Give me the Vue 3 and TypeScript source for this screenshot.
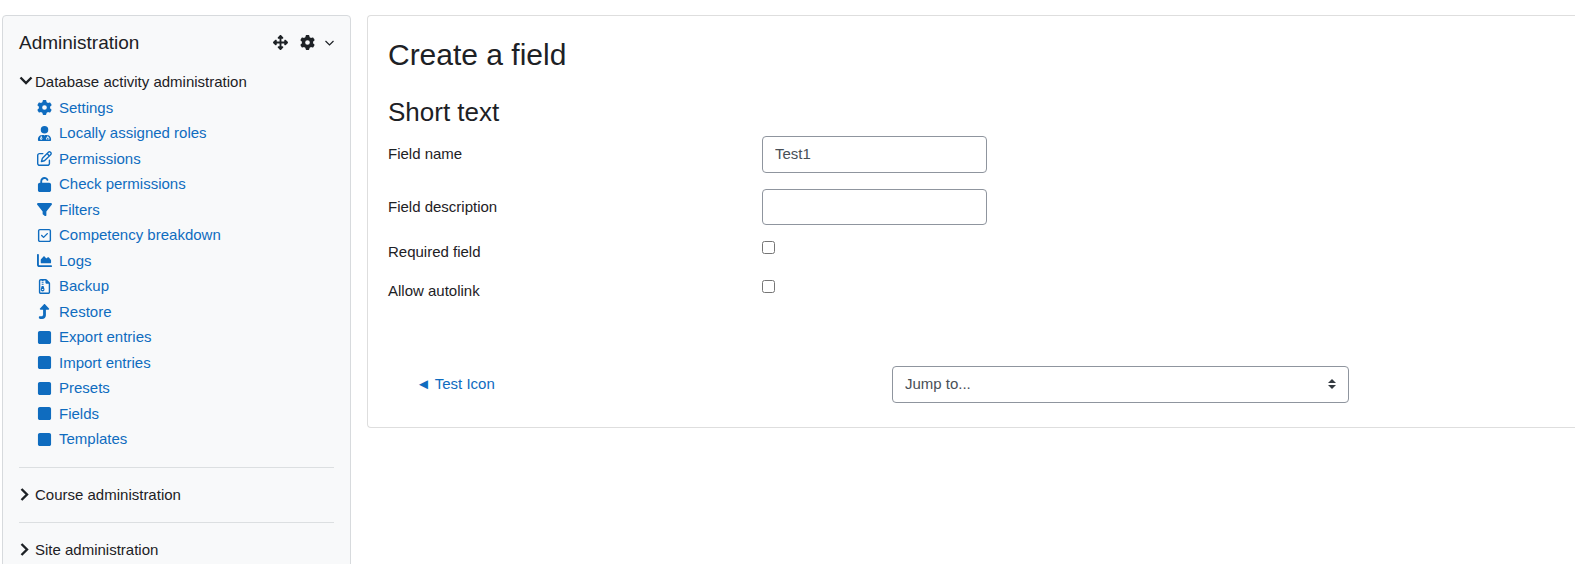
<script setup lang="ts">
import { ref } from 'vue'

interface Glyph {
  box: string
  path: string
}

interface MenuLink {
  label: string
  icon: string
}

const glyphs: Record<string, Glyph> = {
  gear: {
    box: '0 0 512 512',
    path: 'M495.9 166.6c3.2 8.7 .5 18.4-6.4 24.6l-43.3 39.4c1.1 8.3 1.7 16.8 1.7 25.4s-.6 17.1-1.7 25.4l43.3 39.4c6.9 6.2 9.6 15.9 6.4 24.6c-4.4 11.9-9.7 23.3-15.8 34.3l-4.7 8.1c-6.6 11-14 21.4-22.1 31.2c-5.9 7.2-15.7 9.6-24.5 6.8l-55.7-17.7c-13.4 10.3-28.2 18.9-44 25.4l-12.5 57.1c-2 9.1-9 16.3-18.2 17.8c-13.8 2.3-28 3.5-42.5 3.5s-28.7-1.2-42.5-3.5c-9.2-1.5-16.2-8.7-18.2-17.8l-12.5-57.1c-15.8-6.5-30.6-15.1-44-25.4L83.1 425.9c-8.8 2.8-18.6 .3-24.5-6.8c-8.1-9.8-15.5-20.2-22.1-31.2l-4.7-8.1c-6.1-11-11.4-22.4-15.8-34.3c-3.2-8.7-.5-18.4 6.4-24.6l43.3-39.4C64.6 273.1 64 264.6 64 256s.6-17.1 1.7-25.4L22.4 191.2c-6.9-6.2-9.6-15.9-6.4-24.6c4.4-11.9 9.7-23.3 15.8-34.3l4.7-8.1c6.6-11 14-21.4 22.1-31.2c5.9-7.2 15.7-9.6 24.5-6.8l55.7 17.7c13.4-10.3 28.2-18.9 44-25.4l12.5-57.1c2-9.1 9-16.3 18.2-17.8C227.3 1.2 241.5 0 256 0s28.7 1.2 42.5 3.5c9.2 1.5 16.2 8.7 18.2 17.8l12.5 57.1c15.8 6.5 30.6 15.1 44 25.4l55.7-17.7c8.8-2.8 18.6-.3 24.5 6.8c8.1 9.8 15.5 20.2 22.1 31.2l4.7 8.1c6.1 11 11.4 22.4 15.8 34.3zM256 336a80 80 0 1 0 0-160 80 80 0 1 0 0 160z',
  },
  move: {
    box: '0 0 512 512',
    path: 'M278.6 9.4c-12.5-12.5-32.8-12.5-45.3 0l-64 64c-9.2 9.2-11.9 22.9-6.9 34.9s16.6 19.8 29.6 19.8h32v96H128V192c0-12.9-7.8-24.6-19.8-29.6s-25.7-2.2-34.9 6.9l-64 64c-12.5 12.5-12.5 32.8 0 45.3l64 64c9.2 9.2 22.9 11.9 34.9 6.9s19.8-16.6 19.8-29.6V288h96v96H192c-12.9 0-24.6 7.8-29.6 19.8s-2.2 25.7 6.9 34.9l64 64c12.5 12.5 32.8 12.5 45.3 0l64-64c9.2-9.2 11.9-22.9 6.9-34.9s-16.6-19.8-29.6-19.8H288V288h96v32c0 12.9 7.8 24.6 19.8 29.6s25.7 2.2 34.9-6.9l64-64c12.5-12.5 12.5-32.8 0-45.3l-64-64c-9.2-9.2-22.9-11.9-34.9-6.9s-19.8 16.6-19.8 29.6v32H288V128h32c12.9 0 24.6-7.8 29.6-19.8s2.2-25.7-6.9-34.9l-64-64z',
  },
  doctor: {
    box: '0 0 448 512',
    path: 'M224 0a128 128 0 1 0 0 256a128 128 0 1 0 0-256zM134 304C60 304 0 364 0 438v46c0 16 12 28 28 28H420c16 0 28-12 28-28v-46c0-74-60-134-134-134H240l-16 28l-16-28zM98 330h28v58a40 40 0 1 1-28 0zM112 410a16 16 0 1 0 0 32a16 16 0 1 0 0-32zM322 330h28v42c24 6 42 28 42 54v36h-48v-26h20v-10c0-16-12-28-28-28s-28 12-28 28v10h20v26h-48v-36c0-26 18-48 42-54z',
  },
  edit: {
    box: '0 0 512 512',
    path: 'M441 58.9L453.1 71c9.4 9.4 9.4 24.6 0 33.9L424 134.1 377.9 88 407 58.9c9.4-9.4 24.6-9.4 33.9 0zM209.8 256.2L344 121.9 390.1 168 255.8 302.2c-2.9 2.9-6.5 5-10.4 6.1l-58.5 16.7 16.7-58.5c1.1-3.9 3.2-7.5 6.1-10.4zM373.1 25L175.8 222.2c-8.7 8.7-15 19.4-18.3 31.1l-28.6 100c-2.4 8.4-.1 17.4 6.1 23.6s15.2 8.5 23.6 6.1l100-28.6c11.8-3.4 22.5-9.7 31.1-18.3L487 138.9c28.1-28.1 28.1-73.7 0-101.8L474.9 25C446.8-3.1 401.2-3.1 373.1 25zM88 64C39.4 64 0 103.4 0 152V424c0 48.6 39.4 88 88 88H360c48.6 0 88-39.4 88-88V312c0-13.3-10.7-24-24-24s-24 10.7-24 24V424c0 22.1-17.9 40-40 40H88c-22.1 0-40-17.9-40-40V152c0-22.1 17.9-40 40-40H200c13.3 0 24-10.7 24-24s-10.7-24-24-24H88z',
  },
  unlock: {
    box: '0 0 448 512',
    path: 'M144 144c0-44.2 35.8-80 80-80c31.9 0 59.4 18.6 72.3 45.7c7.6 16 26.7 22.8 42.6 15.2s22.8-26.7 15.2-42.6C331 33.7 281.5 0 224 0C144.5 0 80 64.5 80 144v48H64c-35.3 0-64 28.7-64 64V448c0 35.3 28.7 64 64 64H384c35.3 0 64-28.7 64-64V256c0-35.3-28.7-64-64-64H144V144z',
  },
  filter: {
    box: '0 0 512 512',
    path: 'M3.9 54.9C10.5 40.9 24.5 32 40 32H472c15.5 0 29.5 8.9 36.1 22.9s4.6 30.5-5.2 42.5L320 320.9V448c0 12.1-6.8 23.2-17.7 28.6s-23.8 4.3-33.5-3l-64-48c-8.1-6-12.8-15.5-12.8-25.6V320.9L9 97.3C-.7 85.4-2.8 68.8 3.9 54.9z',
  },
  check: {
    box: '0 0 448 512',
    path: 'M64 80c-8.8 0-16 7.2-16 16V416c0 8.8 7.2 16 16 16H384c8.8 0 16-7.2 16-16V96c0-8.8-7.2-16-16-16H64zM0 96C0 60.7 28.7 32 64 32H384c35.3 0 64 28.7 64 64V416c0 35.3-28.7 64-64 64H64c-35.3 0-64-28.7-64-64V96zM337 209L209 337c-9.4 9.4-24.6 9.4-33.9 0l-64-64c-9.4-9.4-9.4-24.6 0-33.9s24.6-9.4 33.9 0l47 47L303 175c9.4-9.4 24.6-9.4 33.9 0s9.4 24.6 0 33.9z',
  },
  chart: {
    box: '0 0 512 512',
    path: 'M64 64c0-17.7-14.3-32-32-32S0 46.3 0 64V400c0 44.2 35.8 80 80 80H480c17.7 0 32-14.3 32-32s-14.3-32-32-32H80c-8.8 0-16-7.2-16-16V64zm96 288H448c17.7 0 32-14.3 32-32V251.8c0-7.6-2.7-15-7.7-20.8l-65.8-76.8c-12.1-14.2-33.7-15-46.9-1.8l-21 21c-10 10-26.4 9.2-35.4-1.6l-39.2-47c-12.6-15.1-35.7-15.4-48.7-.6L135.9 215c-5.1 5.8-7.9 13.3-7.9 21.1v84c0 17.7 14.3 32 32 32z',
  },
  archive: {
    box: '0 0 384 512',
    path: 'M64 0C28.7 0 0 28.7 0 64V448c0 35.3 28.7 64 64 64H320c35.3 0 64-28.7 64-64V154.5c0-17-6.7-33.3-18.7-45.3L274.7 18.7C262.7 6.7 246.5 0 229.5 0H64zM64 464c-8.8 0-16-7.2-16-16V64c0-8.8 7.2-16 16-16H96V80h64V48h64v80c0 17.7 14.3 32 32 32h80V448c0 8.8-7.2 16-16 16H64zM96 112h64v32H96zM96 176h64v32H96zM96 240h64l30 100c10 44-20 84-62 84s-72-40-62-84zM112 344a16 16 0 0 0 0 32h32a16 16 0 0 0 0-32z',
  },
  turnUp: {
    box: '0 0 384 512',
    path: 'M350 177.5c3.8-8.8 2-19-4.6-26l-136-144C204.9 2.7 198.6 0 192 0s-12.9 2.7-17.4 7.5l-136 144c-6.6 7-8.4 17.2-4.6 26s12.5 14.5 22 14.5h88V384c0 17.7-14.3 32-32 32H32c-17.7 0-32 14.3-32 32v32c0 17.7 14.3 32 32 32h80c70.7 0 128-57.3 128-128V192h88c9.6 0 18.2-5.7 22-14.5z',
  },
  square: {
    box: '0 0 448 512',
    path: 'M0 96C0 60.7 28.7 32 64 32H384c35.3 0 64 28.7 64 64V416c0 35.3-28.7 64-64 64H64c-35.3 0-64-28.7-64-64V96z',
  },
}

const links: MenuLink[] = [
  { label: 'Settings', icon: 'gear' },
  { label: 'Locally assigned roles', icon: 'doctor' },
  { label: 'Permissions', icon: 'edit' },
  { label: 'Check permissions', icon: 'unlock' },
  { label: 'Filters', icon: 'filter' },
  { label: 'Competency breakdown', icon: 'check' },
  { label: 'Logs', icon: 'chart' },
  { label: 'Backup', icon: 'archive' },
  { label: 'Restore', icon: 'turnUp' },
  { label: 'Export entries', icon: 'square' },
  { label: 'Import entries', icon: 'square' },
  { label: 'Presets', icon: 'square' },
  { label: 'Fields', icon: 'square' },
  { label: 'Templates', icon: 'square' },
]

const collapsed: string[] = ['Course administration', 'Site administration']

const open = ref(true)
const fieldName = ref('Test1')
const fieldDescription = ref('')
const required = ref(false)
const autolink = ref(false)
const jump = ref('')
</script>

<template>
  <div class="page">
    <aside class="block">
      <header class="block-head">
        <h5>Administration</h5>
        <div class="block-tools">
          <button type="button" aria-label="Move Administration block">
            <svg class="icon" :viewBox="glyphs.move.box"><path :d="glyphs.move.path" /></svg>
          </button>
          <button type="button" aria-label="Actions menu">
            <svg class="icon" :viewBox="glyphs.gear.box"><path :d="glyphs.gear.path" /></svg>
            <svg class="caret" viewBox="0 0 10 10"><path d="M1.5 3L5.5 7L9.5 3" /></svg>
          </button>
        </div>
      </header>

      <nav class="tree" aria-label="Administration">
        <section>
          <button type="button" class="branch" :aria-expanded="open" @click="open = !open">
            <svg class="chevron" viewBox="0 0 14 14"><path d="M1.5 2.5L7 8L12.5 2.5" /></svg>
            Database activity administration
          </button>
          <ul v-show="open">
            <li v-for="link in links" :key="link.label">
              <a href="#">
                <svg class="icon" :viewBox="glyphs[link.icon].box"><path fill-rule="evenodd" :d="glyphs[link.icon].path" /></svg>
                {{ link.label }}
              </a>
            </li>
          </ul>
        </section>
        <section v-for="name in collapsed" :key="name">
          <button type="button" class="branch" aria-expanded="false">
            <svg class="chevron" viewBox="0 0 14 14"><path d="M2.5 1L8 6.5L2.5 12" /></svg>
            {{ name }}
          </button>
        </section>
      </nav>
    </aside>

    <main class="content">
      <h2>Create a field</h2>
      <form @submit.prevent>
        <h3>Short text</h3>
        <div class="row">
          <label class="padded" for="name">Field name</label>
          <input id="name" v-model="fieldName" class="control" type="text" />
        </div>
        <div class="row">
          <label class="padded" for="description">Field description</label>
          <input id="description" v-model="fieldDescription" class="control" type="text" />
        </div>
        <div class="row">
          <label for="required">Required field</label>
          <input id="required" v-model="required" type="checkbox" />
        </div>
        <div class="row">
          <label for="autolink">Allow autolink</label>
          <input id="autolink" v-model="autolink" type="checkbox" />
        </div>
      </form>
      <div class="activity-nav">
        <a href="#">◄ Test Icon</a>
        <div class="jump">
          <select v-model="jump" class="control" aria-label="Jump to...">
            <option value="">Jump to...</option>
          </select>
          <svg viewBox="0 0 4 5"><path d="M2 0L0 2h4zm0 5L0 3h4z" /></svg>
        </div>
      </div>
    </main>
  </div>
</template>

<style>
body {
  background: #fff;
}
</style>

<style scoped>
.page {
  display: grid;
  grid-template-columns: 13fr 45fr;
  align-items: start;
  gap: 16px;
  padding: 15px 0 0 2px;
  color: #1d2125;
  font: 15px/1.5 "Liberation Sans", Arial, sans-serif;
}

h2,
h3,
h5,
ul {
  margin: 0;
  padding: 0;
  font-weight: 400;
}

button {
  border: 0;
  padding: 0;
  background: none;
  color: inherit;
  font: inherit;
  cursor: pointer;
}

a {
  color: #0f6cbf;
  text-decoration: none;
}

.icon {
  flex: none;
  width: 15px;
  height: 15px;
  fill: currentColor;
}

.block {
  border: 1px solid #d7dadd;
  border-radius: 4px;
  padding: 16px;
  background: #f8f9fa;
}

.block-head {
  display: flex;
  align-items: center;
  justify-content: space-between;
  margin-bottom: 18px;
}

h5 {
  font-size: 19px;
  line-height: 21px;
}

.block-tools,
.block-tools button {
  display: flex;
  align-items: center;
}

.block-tools {
  gap: 12px;
}

.block-tools button {
  gap: 9px;
}

.caret {
  width: 10px;
  height: 10px;
  fill: none;
  stroke: currentColor;
  stroke-width: 1.2;
}

.branch {
  display: flex;
  align-items: center;
  gap: 2px;
}

.chevron {
  width: 14px;
  height: 14px;
  fill: none;
  stroke: currentColor;
  stroke-width: 2.4;
}

.tree section + section {
  margin-top: 16px;
  border-top: 1px solid #dcdfe1;
  padding-top: 16px;
}

.tree ul {
  display: grid;
  gap: 3px;
  margin-top: 3px;
  padding-left: 18px;
  list-style: none;
}

.tree li a {
  display: flex;
  align-items: center;
  gap: 7px;
}

.content {
  border: 1px solid #dedede;
  border-right: 0;
  border-radius: 4px 0 0 4px;
  padding: 21px 20px 24px;
}

h2 {
  margin-bottom: 24px;
  font-size: 30px;
  line-height: 36px;
}

h3 {
  margin-bottom: 8px;
  font-size: 26px;
  line-height: 31px;
}

.row {
  display: grid;
  grid-template-columns: 25fr 53fr;
  align-items: start;
  justify-items: start;
  margin-bottom: 16px;
}

.padded {
  padding-top: 7px;
}

.control {
  box-sizing: border-box;
  border: 1px solid #8f959e;
  border-radius: 4px;
  padding: 6px 12px;
  background: #fff;
  color: #495057;
  font: inherit;
  line-height: 1.5;
}

input.control {
  width: 225px;
}

input[type="checkbox"] {
  width: 13px;
  height: 13px;
  margin: 0;
}

.activity-nav {
  display: grid;
  grid-template-columns: 38fr 72fr;
  grid-template-columns: 19fr 25fr;
  align-items: center;
  margin-top: 64px;
}

.activity-nav > a {
  padding-left: 28px;
}

.jump {
  display: grid;
  position: relative;
  width: 69%;
}

.jump select {
  appearance: none;
}

.jump svg {
  position: absolute;
  top: 50%;
  right: 13px;
  width: 8px;
  height: 10px;
  margin-top: -5px;
  fill: #343a40;
  pointer-events: none;
}
</style>
